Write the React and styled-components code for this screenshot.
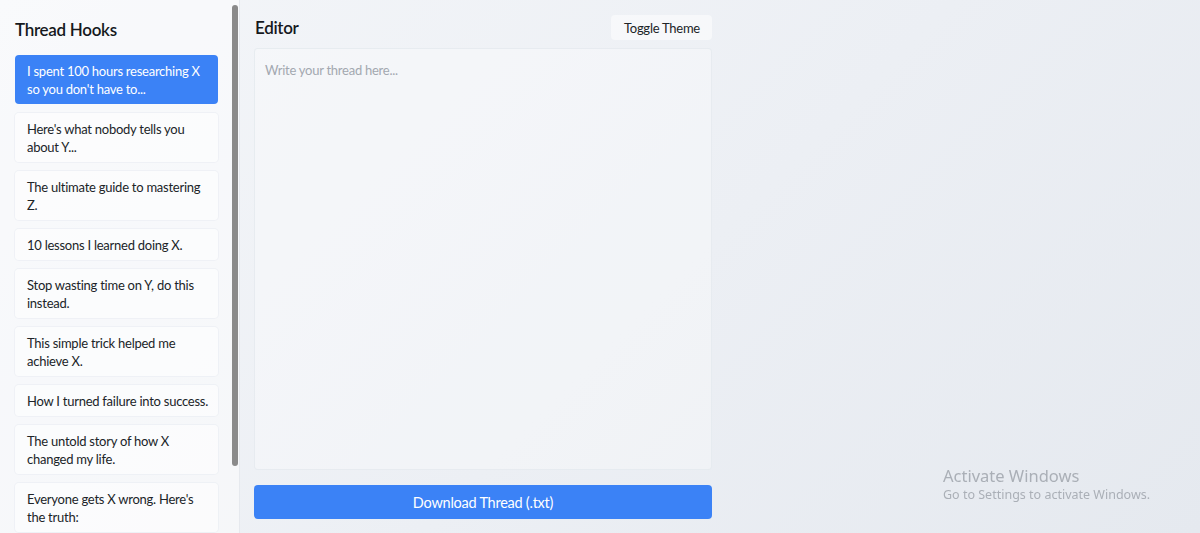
import React from "react";
import styled, { createGlobalStyle } from "styled-components";

const GlobalStyle = createGlobalStyle`
  * { box-sizing: border-box; }
  html, body { margin: 0; padding: 0; height: 100%; }
  body {
    font-family: Lato, "Noto Sans", sans-serif;
    color: #1f2328;
    background: linear-gradient(135deg, #f4f6f9 0%, #eceff4 55%, #e5e9ef 100%);
  }
  #root { height: 100%; }
`;

const Layout = styled.div`
  display: flex;
  height: 100vh;
  overflow: hidden;
`;

const Sidebar = styled.aside`
  width: 240px;
  flex: none;
  height: 100%;
  display: flex;
  background: rgba(255, 255, 255, 0.45);
  border-right: 1px solid #e6e9ee;
`;

const SidebarScroll = styled.div`
  flex: 1;
  height: 100%;
  overflow-y: auto;
  padding: 15px 14px 15px 15px;
  scrollbar-width: none;
  &::-webkit-scrollbar { display: none; }
`;

const ScrollTrack = styled.div`
  position: relative;
  width: 6px;
  flex: none;
  margin: 5px 1px 5px 0;
`;

const ScrollThumb = styled.div`
  position: absolute;
  left: 0;
  width: 6px;
  border-radius: 3px;
  background: #8a8a8a;
`;

const Title = styled.h2`
  margin: 4px 0 14px;
  font-size: 17px;
  font-weight: 600;
  letter-spacing: -0.3px;
  line-height: 22px;
  color: #16191d;
`;

const HookList = styled.ul`
  list-style: none;
  margin: 0;
  padding: 0;
  display: flex;
  flex-direction: column;
  gap: 9px;
`;

const Hook = styled.li`
  padding: 7px 6px 6px 12px;
  border-radius: 4px;
  font-size: 13px;
  letter-spacing: -0.25px;
  line-height: 18px;
  cursor: pointer;
  background: ${(p) => (p.$active ? "#3b82f6" : "rgba(255, 255, 255, 0.55)")};
  color: ${(p) => (p.$active ? "#ffffff" : "#202428")};
  box-shadow: ${(p) => (p.$active ? "none" : "0 0 0 1px rgba(235, 238, 243, 0.7)")};
`;

const Main = styled.main`
  flex: 1;
  padding: 15px 14px 14px;
  display: flex;
  flex-direction: column;
`;

const EditorColumn = styled.section`
  width: 458px;
  flex: 1;
  display: flex;
  flex-direction: column;
`;

const Header = styled.div`
  display: flex;
  align-items: center;
  justify-content: space-between;
  height: 25px;
  margin-bottom: 8px;
`;

const Heading = styled.h2`
  margin: 0 0 0 1px;
  font-size: 17px;
  font-weight: 600;
  letter-spacing: -0.3px;
  color: #16191d;
`;

const ThemeButton = styled.button`
  height: 25px;
  padding: 0 12px 0 13px;
  border: none;
  border-radius: 4px;
  background: rgba(255, 255, 255, 0.5);
  font-family: inherit;
  font-size: 13px;
  letter-spacing: -0.25px;
  color: #202428;
  cursor: pointer;
`;

const ThreadInput = styled.textarea`
  flex: 1;
  resize: none;
  padding: 12px 10px;
  border: 1px solid rgba(228, 232, 238, 0.8);
  border-radius: 4px;
  background: rgba(255, 255, 255, 0.3);
  font-family: inherit;
  font-size: 13px;
  letter-spacing: -0.25px;
  line-height: 18px;
  color: #202428;
  outline: none;

  &::placeholder { color: #a3a8b0; }
`;

const DownloadButton = styled.button`
  margin-top: 15px;
  height: 34px;
  border: none;
  border-radius: 4px;
  background: #3b82f6;
  color: #ffffff;
  font-family: inherit;
  font-size: 14.5px;
  letter-spacing: -0.25px;
  cursor: pointer;
`;

const Watermark = styled.div`
  position: fixed;
  left: 943px;
  top: 466px;
  color: rgba(150, 155, 163, 0.75);
  font-family: "Noto Sans", sans-serif;
  pointer-events: none;
`;

const WatermarkTitle = styled.div`
  font-size: 16.5px;
  line-height: 20px;
`;

const WatermarkLine = styled.div`
  font-size: 12.5px;
  line-height: 18px;
`;

const hooks = [
  "I spent 100 hours researching X so you don't have to...",
  "Here's what nobody tells you about Y...",
  "The ultimate guide to mastering Z.",
  "10 lessons I learned doing X.",
  "Stop wasting time on Y, do this instead.",
  "This simple trick helped me achieve X.",
  "How I turned failure into success.",
  "The untold story of how X changed my life.",
  "Everyone gets X wrong. Here's the truth:",
  "What I wish I knew before starting Y.",
];

// Thin scroll indicator for the hook list; its size follows the list's scroll state.
function useScrollThumb(ref) {
  const [thumb, setThumb] = React.useState({ top: 0, height: 0 });
  const update = React.useCallback(() => {
    const el = ref.current;
    if (!el) return;
    const track = el.clientHeight - 10;
    const ratio = el.clientHeight / el.scrollHeight;
    const height = ratio >= 1 ? 0 : Math.max(20, track * ratio);
    const max = el.scrollHeight - el.clientHeight;
    const top = max > 0 ? (el.scrollTop / max) * (track - height) : 0;
    setThumb({ top, height });
  }, [ref]);
  React.useLayoutEffect(() => {
    update();
    window.addEventListener("resize", update);
    return () => window.removeEventListener("resize", update);
  }, [update]);
  return [thumb, update];
}

export default function App() {
  const [active, setActive] = React.useState(0);
  const [text, setText] = React.useState("");
  const scrollRef = React.useRef(null);
  const [thumb, onScroll] = useScrollThumb(scrollRef);

  return (
    <>
      <GlobalStyle />
      <Layout>
        <Sidebar>
          <SidebarScroll ref={scrollRef} onScroll={onScroll}>
            <Title>Thread Hooks</Title>
            <HookList>
              {hooks.map((h, i) => (
                <Hook key={h} $active={i === active} onClick={() => setActive(i)}>
                  {h}
                </Hook>
              ))}
            </HookList>
          </SidebarScroll>
          <ScrollTrack>
            {thumb.height > 0 && (
              <ScrollThumb style={{ top: thumb.top, height: thumb.height }} />
            )}
          </ScrollTrack>
        </Sidebar>
        <Main>
          <EditorColumn>
            <Header>
              <Heading>Editor</Heading>
              <ThemeButton>Toggle Theme</ThemeButton>
            </Header>
            <ThreadInput
              placeholder="Write your thread here..."
              value={text}
              onChange={(e) => setText(e.target.value)}
            />
            <DownloadButton>Download Thread (.txt)</DownloadButton>
          </EditorColumn>
        </Main>
      </Layout>
      <Watermark>
        <WatermarkTitle>Activate Windows</WatermarkTitle>
        <WatermarkLine>Go to Settings to activate Windows.</WatermarkLine>
      </Watermark>
    </>
  );
}
